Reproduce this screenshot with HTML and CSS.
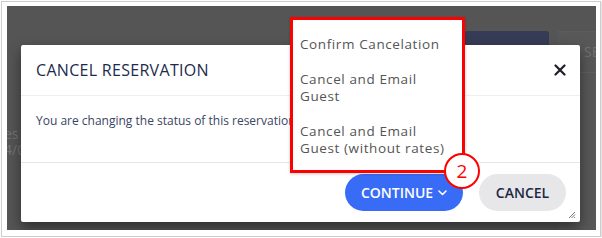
FILE: index.html
```html
<!DOCTYPE html>
<html>
<head>
<meta charset="utf-8">
<link rel="stylesheet" href="styles.css">
</head>
<body>
<div class="frame">
  <div class="app">
    <div class="bg-page">
      <div class="bg-topbtn"></div>
      <div class="bg-side"><span>SE</span></div>
      <div class="bg-left"><div>es</div><div>4/0</div></div>
    </div>
    <div class="modal">
      <div class="modal-header">
        <h2 class="modal-title">CANCEL RESERVATION</h2>
        <svg class="close" width="12" height="12" viewBox="0 0 12 12"><path d="M1.5 1.5 L10.5 10.5 M10.5 1.5 L1.5 10.5" stroke="#1c1f2a" stroke-width="2.2" stroke-linecap="round"/></svg>
      </div>
      <div class="modal-body">You are changing the status of this reservation to Canceled.</div>
      <div class="modal-footer">
        <button class="btn btn-primary">CONTINUE <svg width="9" height="6" viewBox="0 0 9 6"><path d="M1 1 L4.5 4.5 L8 1" stroke="#fff" stroke-width="1.6" fill="none" stroke-linecap="round" stroke-linejoin="round"/></svg></button>
        <button class="btn btn-secondary">CANCEL</button>
      </div>
      <svg class="resize" width="8" height="8" viewBox="0 0 8 8"><path d="M7 1 L1 7 M7 3.5 L3.5 7 M7 6 L6 7" stroke="#777" stroke-width="1"/></svg>
      <div class="menu">
        <div class="menu-item">Confirm Cancelation</div>
        <div class="menu-item">Cancel and Email Guest</div>
        <div class="menu-item">Cancel and Email Guest (without rates)</div>
      </div>
      <div class="badge">2</div>
    </div>
  </div>
</div>
</body>
</html>
```
FILE: styles.css
```css
html, body {
  margin: 0;
  padding: 0;
  background: #ffffff;
}
body {
  font-family: "Open Sans", "DejaVu Sans", sans-serif;
}
.frame {
  margin: 1px 0 0 1px;
  width: 588px;
  height: 228px;
  padding: 4px 5px 2px 5px;
  border: 1px solid #cdcdcd;
  box-shadow: 1px 1px 2px rgba(0,0,0,0.15);
}
.app {
  position: relative;
  width: 589px;
  height: 224px;
  background: #545554;
  overflow: hidden;
}
.bg-page {
  position: absolute;
  inset: 0;
}
.bg-topbtn {
  position: absolute;
  left: 458px;
  top: 25px;
  width: 84px;
  height: 30px;
  background: #363c55;
  border-radius: 2px;
}
.bg-side {
  position: absolute;
  left: 551px;
  top: 25px;
  width: 40px;
  height: 200px;
  background: #575857;
  border-top: 1px solid #5c5c5c;
}
.bg-side span {
  display: block;
  padding: 10px 0 0 26px;
  font-size: 14px;
  color: #727273;
  height: 30px;
  border-bottom: 1px solid #606060;
}
.bg-left {
  position: absolute;
  left: -3px;
  top: 120px;
  font-size: 14px;
  line-height: 16px;
  color: #747474;
}
.modal {
  position: absolute;
  left: 14px;
  top: 39px;
  width: 559px;
  height: 177px;
  background: #ffffff;
  border-radius: 2px;
  box-shadow: 0 6px 14px rgba(0,0,0,0.45);
  display: flex;
  flex-direction: column;
}
.modal-header {
  height: 50px;
  border-bottom: 1px solid #eeeeee;
  display: flex;
  align-items: center;
  justify-content: space-between;
  padding: 0 14px 0 15px;
}
.modal-title {
  margin: 0;
  font-size: 16px;
  font-weight: 500;
  letter-spacing: 0.3px;
  color: #1d2a4d;
}
.close {
  display: block;
}
.modal-body {
  height: 67px;
  box-sizing: border-box;
  padding: 16px 15px 0;
  font-size: 12px;
  color: #3a4563;
  border-bottom: 1px solid #e6e6e6;
  white-space: nowrap;
  overflow: hidden;
}
.modal-footer {
  flex: 1;
  display: flex;
  justify-content: flex-end;
  align-items: flex-start;
  gap: 16px;
  padding: 11px 14px 0 0;
}
.btn {
  font-family: "Open Sans", "DejaVu Sans", sans-serif;
  font-weight: 600;
  font-size: 14px;
  border: none;
  height: 37px;
  border-radius: 19px;
  display: flex;
  align-items: center;
  justify-content: center;
  gap: 5px;
}
.btn-primary {
  width: 118px;
  background: #386cf6;
  color: #ffffff;
}
.btn-secondary {
  width: 87px;
  background: #e7e7e9;
  color: #1d2846;
}
.resize {
  position: absolute;
  right: 4px;
  bottom: 3px;
}
.menu {
  position: absolute;
  left: 269px;
  top: -28px;
  width: 169px;
  padding: 6px 0 5px;
  background: #ffffff;
  border: 3px solid #ff0000;
  box-shadow: 0 1px 3px rgba(0,0,0,0.2);
}
.menu-item {
  padding: 10px 7px 8px;
  font-size: 13.5px;
  letter-spacing: 0.6px;
  line-height: 17px;
  color: #555555;
}
.badge {
  position: absolute;
  left: 423px;
  top: 108px;
  width: 32px;
  height: 32px;
  border: 2px solid #ff0000;
  border-radius: 50%;
  background: #ffffff;
  color: #ff0000;
  font-size: 19px;
  line-height: 32px;
  text-align: center;
}
```
